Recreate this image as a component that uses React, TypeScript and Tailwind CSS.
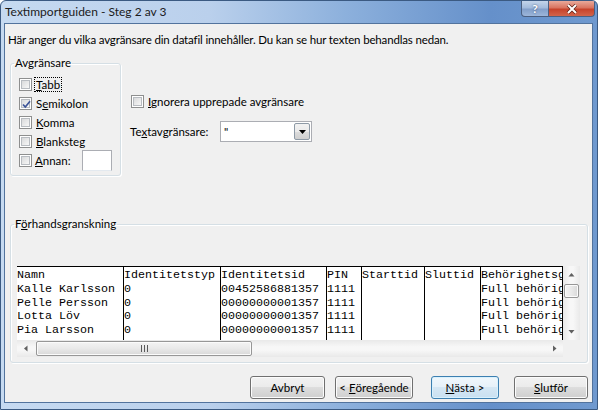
import React from 'react';

const Box: React.FC<{ checked?: boolean }> = ({ checked }) => (
  <span className="relative flex h-[13px] w-[13px] shrink-0 items-center justify-center border border-[#8e8f8f] bg-white">
    <span className="h-[9px] w-[9px] border border-[#b8bcc1] bg-[linear-gradient(135deg,#d9dadb,#f7f7f7)]" />
    {checked && (
      <svg className="absolute left-[1px] top-[1px]" width="11" height="11" viewBox="0 0 11 11" aria-hidden="true">
        <path d="M2 5.5 L4.3 8 L9 2.2" fill="none" stroke="#3d5598" strokeWidth="1.7" />
      </svg>
    )}
  </span>
);

const CheckRow: React.FC<{ checked?: boolean; focus?: boolean; children: React.ReactNode }> = ({ checked, focus, children }) => (
  <div className="flex h-[19px] items-center gap-[2px]">
    <Box checked={checked} />
    <span className={focus ? 'border border-dotted border-black px-[1px] leading-[13px]' : 'px-[2px] leading-[13px]'}>{children}</span>
  </div>
);

const Button: React.FC<{ width: string; primary?: boolean; children: React.ReactNode }> = ({ width, primary, children }) => (
  <div
    className={
      primary
        ? `${width} flex h-[23px] items-center justify-center whitespace-pre rounded-[3px] border border-[#3c7fb1] bg-[linear-gradient(to_bottom,#f0f7fc_0%,#e6f1f9_50%,#d5e7f4_50%,#c9e0f1_100%)] shadow-[inset_0_0_0_1px_#d9f1fd]`
        : `${width} flex h-[23px] items-center justify-center whitespace-pre rounded-[3px] border border-[#707070] bg-[linear-gradient(to_bottom,#f2f2f2_0%,#ebebeb_50%,#dddddd_50%,#cfcfcf_100%)] shadow-[inset_0_0_0_1px_#fcfcfc]`
    }
  >
    {children}
  </div>
);

const Arrow: React.FC<{ dir: 'up' | 'down' | 'left' | 'right' }> = ({ dir }) => {
  const d = {
    up: 'M0.5 4.5 L3.5 1 L6.5 4.5 Z',
    down: 'M0.5 1 L3.5 4.5 L6.5 1 Z',
    left: 'M4.5 0.5 L1 3.5 L4.5 6.5 Z',
    right: 'M1 0.5 L4.5 3.5 L1 6.5 Z',
  }[dir];
  const vertical = dir === 'up' || dir === 'down';
  return (
    <svg width={vertical ? 7 : 5} height={vertical ? 5 : 7} viewBox={vertical ? '0 0 7 5' : '0 0 5 7'} aria-hidden="true">
      <path d={d} fill="#606060" />
    </svg>
  );
};

const columns = [
  { w: 'w-[106px]', edge: '', rows: ['Namn', 'Kalle Karlsson', 'Pelle Persson', 'Lotta Löv', 'Pia Larsson'] },
  { w: 'w-[97px]', edge: 'border-l border-black', rows: ['Identitetstyp', '0', '0', '0', '0'] },
  { w: 'w-[106px]', edge: 'border-l border-black', rows: ['Identitetsid', '00452586881357', '00000000001357', '00000000001357', '00000000001357'] },
  { w: 'w-[35px]', edge: 'border-l border-black', rows: ['PIN', '1111', '1111', '1111', '1111'] },
  { w: 'w-[63px]', edge: 'border-l border-black', rows: ['Starttid', '', '', '', ''] },
  { w: 'w-[56px]', edge: 'border-l border-black', rows: ['Sluttid', '', '', '', ''] },
  { w: 'w-[82px]', edge: 'border-l border-black', rows: ['Behörighetsg', 'Full behörig', 'Full behörig', 'Full behörig', 'Full behörig'] },
];

const TitleBar: React.FC = () => (
  <div className="flex h-[22px] shrink-0 items-start justify-between">
    <span className="pl-[4px] pt-[3px] text-[12px] leading-[16px] text-[#1b1b1b]">Textimportguiden - Steg 2 av 3</span>
    <div className="mr-[2px] flex">
      <div className="flex h-[16px] w-[28px] items-center justify-center rounded-bl-[4px] border border-t-0 border-[#4b5f80] bg-[linear-gradient(to_bottom,#c3d4ea_0%,#a3bbdc_45%,#839fca_55%,#9cb6da_100%)] text-[12px] font-bold leading-none text-white [text-shadow:0_0_2px_#33486a]">
        ?
      </div>
      <div className="flex h-[16px] w-[46px] items-center justify-center rounded-br-[4px] border border-l-0 border-t-0 border-[#4b5f80] bg-[linear-gradient(to_bottom,#e9a99a_0%,#d97460_45%,#c7432b_55%,#d2644b_100%)]">
        <svg width="12" height="10" viewBox="0 0 12 10" aria-hidden="true">
          <path d="M2 1 L10 9 M10 1 L2 9" stroke="#5a1e14" strokeWidth="3.4" />
          <path d="M2 1 L10 9 M10 1 L2 9" stroke="#ffffff" strokeWidth="2" />
        </svg>
      </div>
    </div>
  </div>
);

export default function App() {
  return (
    <div className="flex h-[410px] w-[598px] flex-col overflow-hidden rounded-t-[6px] border border-[#3b5a82] bg-[linear-gradient(to_right,#c6daf1_0%,#bad0ec_35%,#8cb0dc_58%,#6590ca_82%,#6f99cf_100%)] font-['Lato','Noto_Sans',sans-serif] text-[11.5px] text-black">
      <TitleBar />

      <div className="mb-[6px] ml-[3px] mr-[4px] flex flex-1 flex-col border border-[#52739d] bg-[#f0f0f0]">
        <p className="ml-[3px] mt-[8px] leading-[16px] tracking-[-0.15px]">
          Här anger du vilka avgränsare din datafil innehåller. Du kan se hur texten behandlas nedan.
        </p>

        <div className="mt-[7px] flex items-start">
          <fieldset className="ml-[5px] w-[111px] rounded-[3px] border border-[#d5dfe5] shadow-[inset_1px_1px_0_#ffffff,1px_1px_0_#ffffff]">
            <legend className="ml-[3px] px-[1px] leading-[16px]">Avgränsare</legend>
            <div className="flex flex-col pb-[5px] pl-[8px] pt-[4px]">
              <CheckRow focus>
                <u>T</u>abb
              </CheckRow>
              <CheckRow checked>
                S<u>e</u>mikolon
              </CheckRow>
              <CheckRow>
                <u>K</u>omma
              </CheckRow>
              <CheckRow>
                <u>B</u>lanksteg
              </CheckRow>
              <div className="flex h-[19px] items-center">
                <Box />
                <span className="w-[50px] pl-[3px] leading-[13px]">
                  <u>A</u>nnan:
                </span>
                <div className="h-[21px] w-[30px] border border-[#abadb3] border-b-[#e3e9ef] bg-white" />
              </div>
            </div>
          </fieldset>

          <div className="ml-[10px] flex flex-col">
            <div className="mt-[37px] flex h-[19px] items-center gap-[2px]">
              <Box />
              <span className="px-[2px] leading-[13px]">
                <u>I</u>gnorera upprepade avgränsare
              </span>
            </div>
            <div className="mt-[10px] flex h-[21px] items-center">
              <span className="-ml-[1px] w-[90px]">
                Te<u>x</u>tavgränsare:
              </span>
              <div className="flex h-[21px] w-[92px] items-center border border-[#abadb3] bg-white">
                <span className="flex-1 pl-[3px] leading-[16px]">"</span>
                <div className="mr-[1px] flex h-[17px] w-[16px] items-center justify-center rounded-[2px] border border-[#8e9aa6] bg-[linear-gradient(to_bottom,#f2f2f2_0%,#ebebeb_50%,#dddddd_50%,#cfcfcf_100%)]">
                  <svg width="7" height="4" viewBox="0 0 7 4" aria-hidden="true">
                    <path d="M0 0 L7 0 L3.5 4 Z" fill="#000000" />
                  </svg>
                </div>
              </div>
            </div>
          </div>
        </div>

        <fieldset className="ml-[5px] mt-[40px] w-[578px] rounded-[3px] border border-[#d5dfe5] shadow-[inset_1px_1px_0_#ffffff,1px_1px_0_#ffffff]">
          <legend className="ml-[3px] px-[1px] leading-[16px]">
            F<u>ö</u>rhandsgranskning
          </legend>
          <div className="pb-[5px] pl-[6px] pt-[34px]">
            <div className="flex w-[563px] flex-col">
              <div className="flex h-[74px]">
                <div className="flex w-[546px] border-r border-t border-black bg-white font-['Liberation_Mono','Courier_New',monospace] text-[11.67px] leading-[13.75px] text-black">
                  {columns.map((col, i) => (
                    <div key={i} className={`${col.w} ${col.edge} shrink-0 overflow-hidden whitespace-pre pt-[2px]`}>
                      {col.rows.map((r, j) => (
                        <div key={j} className="h-[13.75px]">
                          {r}
                        </div>
                      ))}
                    </div>
                  ))}
                </div>
                <div className="flex w-[17px] flex-col items-center bg-[linear-gradient(to_right,#e9e9e9,#f7f7f7_40%,#f7f7f7_60%,#e9e9e9)]">
                  <div className="flex h-[17px] w-full items-center justify-center">
                    <Arrow dir="up" />
                  </div>
                  <div className="mt-[1px] h-[14px] w-[15px] rounded-[2px] border border-[#979797] bg-[linear-gradient(to_right,#f4f4f4,#e9e9e9_50%,#d8d8d8)] shadow-[inset_0_0_0_1px_#fbfbfb]" />
                  <div className="flex-1" />
                  <div className="flex h-[17px] w-full items-center justify-center">
                    <Arrow dir="down" />
                  </div>
                </div>
              </div>
              <div className="flex h-[17px]">
                <div className="flex w-[546px] items-center bg-[linear-gradient(to_bottom,#e9e9e9,#f7f7f7_40%,#f7f7f7_60%,#e9e9e9)]">
                  <div className="flex h-[17px] w-[17px] items-center justify-center">
                    <Arrow dir="left" />
                  </div>
                  <div className="ml-[2px] flex h-[15px] w-[216px] items-center justify-center gap-[2px] rounded-[2px] border border-[#979797] bg-[linear-gradient(to_bottom,#f4f4f4,#e9e9e9_50%,#d8d8d8)] shadow-[inset_0_0_0_1px_#fbfbfb]">
                    <span className="h-[7px] w-[1px] bg-[#5a5a5a]" />
                    <span className="h-[7px] w-[1px] bg-[#5a5a5a]" />
                    <span className="h-[7px] w-[1px] bg-[#5a5a5a]" />
                  </div>
                  <div className="flex-1" />
                  <div className="flex h-[17px] w-[17px] items-center justify-center">
                    <Arrow dir="right" />
                  </div>
                </div>
                <div className="w-[17px] bg-[#f0f0f0]" />
              </div>
            </div>
          </div>
        </fieldset>

        <div className="ml-[245px] mt-[13px] flex">
          <Button width="w-[75px]">Avbryt</Button>
          <div className="ml-[10px]">
            <Button width="w-[78px]">
              {'< '}
              <u>F</u>öregående
            </Button>
          </div>
          <div className="ml-[18px]">
            <Button width="w-[68px]" primary>
              <u>N</u>ästa &gt;
            </Button>
          </div>
          <div className="ml-[15px]">
            <Button width="w-[74px]">
              <u>S</u>lutför
            </Button>
          </div>
        </div>
      </div>
    </div>
  );
}
